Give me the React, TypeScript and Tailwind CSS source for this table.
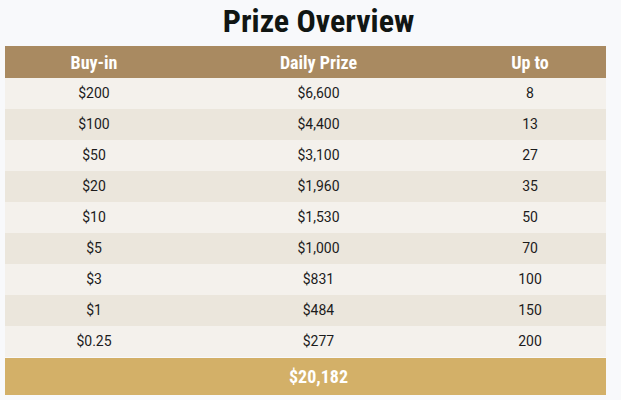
const rows = [
  { buyIn: "$200", prize: "$6,600", upTo: "8" },
  { buyIn: "$100", prize: "$4,400", upTo: "13" },
  { buyIn: "$50", prize: "$3,100", upTo: "27" },
  { buyIn: "$20", prize: "$1,960", upTo: "35" },
  { buyIn: "$10", prize: "$1,530", upTo: "50" },
  { buyIn: "$5", prize: "$1,000", upTo: "70" },
  { buyIn: "$3", prize: "$831", upTo: "100" },
  { buyIn: "$1", prize: "$484", upTo: "150" },
  { buyIn: "$0.25", prize: "$277", upTo: "200" },
];

export default function App() {
  return (
    <div className="min-h-[400px] w-[621px] bg-[#f8f9fb] font-['Roboto',sans-serif]">
      {/* title */}
      <h1 className="h-[46px] pt-[1px] pl-[16px] text-center text-[32px] font-bold leading-[40px] text-[#111613] font-stretch-condensed">
        Prize Overview
      </h1>

      {/* table */}
      <div className="ml-[5px] w-[601px]">
        <div className="grid h-[32px] grid-cols-[178px_271px_1fr] items-center bg-[#a98a61] text-[18px] font-bold text-white font-stretch-condensed">
          <div className="text-center">Buy-in</div>
          <div className="text-center">Daily Prize</div>
          <div className="text-center">Up to</div>
        </div>

        {rows.map((row, i) => (
          <div
            key={row.buyIn}
            className={`grid h-[31px] grid-cols-[178px_271px_1fr] items-center text-[14px] text-[#1c1c1c] ${
              i % 2 === 0 ? "bg-[#f4f1ec]" : "bg-[#ebe6dc]"
            }`}
          >
            <div className="text-center">{row.buyIn}</div>
            <div className="text-center">{row.prize}</div>
            <div className="text-center">{row.upTo}</div>
          </div>
        ))}

        <div className="mt-[1px] grid h-[37px] grid-cols-[178px_271px_1fr] items-center bg-[#d3b068] text-[18px] font-bold text-white font-stretch-condensed">
          <div />
          <div className="text-center">$20,182</div>
          <div />
        </div>
      </div>
    </div>
  );
}
